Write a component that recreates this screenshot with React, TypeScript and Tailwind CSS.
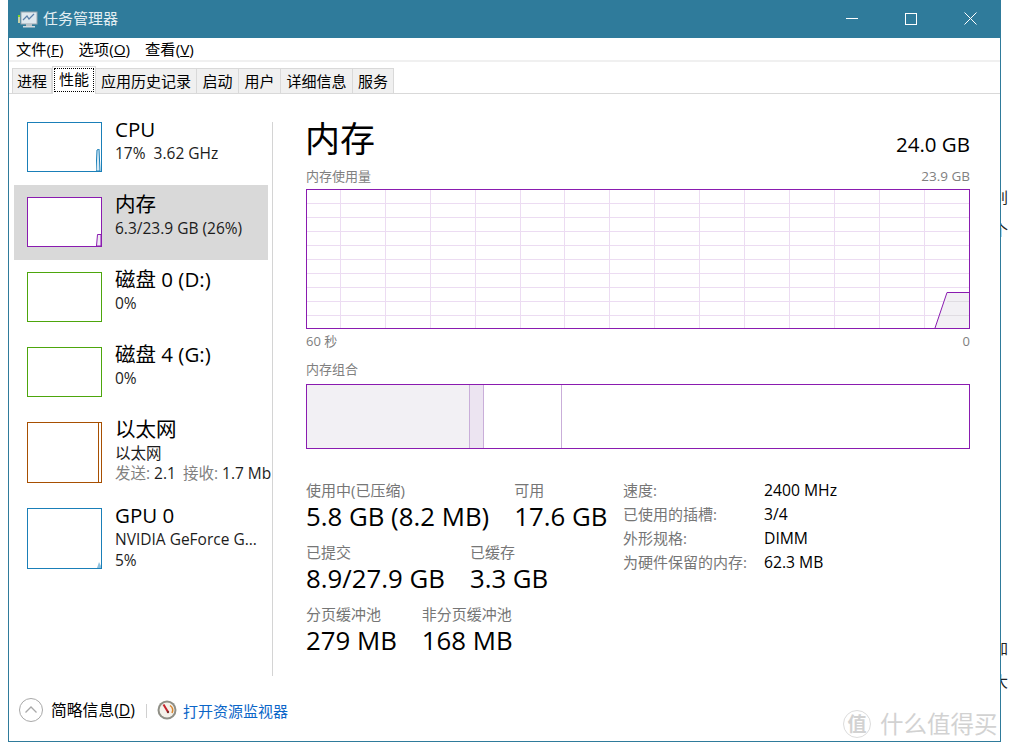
const FONT = "[font-family:'Open_Sans','Noto_Sans_CJK_SC',sans-serif]";

const sideItems = [
  { title: "CPU", lines: ["17%  3.62 GHz"], color: "border-[#1a7fb8]", h: "h-[75px]", thumb: "h-[50px]", spark: "cpu" },
  { title: "内存", lines: ["6.3/23.9 GB (26%)"], color: "border-[#8a1bb0]", h: "h-[75px]", thumb: "h-[50px]", spark: "mem", active: true },
  { title: "磁盘 0 (D:)", lines: ["0%"], color: "border-[#4da60c]", h: "h-[75px]", thumb: "h-[50px]" },
  { title: "磁盘 4 (G:)", lines: ["0%"], color: "border-[#4da60c]", h: "h-[75px]", thumb: "h-[50px]" },
  { title: "以太网", lines: ["以太网"], net: true, color: "border-[#a74f01]", h: "h-[86px]", thumb: "h-[61px]", spark: "net" },
  { title: "GPU 0", lines: ["NVIDIA GeForce G...", "5%"], color: "border-[#1a7fb8]", h: "h-[85px]", thumb: "h-[61px]", spark: "gpu" },
];

const tabs = [
  { label: "进程", w: "w-[40px]" },
  { label: "性能", w: "w-[44px]", active: true },
  { label: "应用历史记录", w: "w-[101px]" },
  { label: "启动", w: "w-[42px]" },
  { label: "用户", w: "w-[42px]" },
  { label: "详细信息", w: "w-[72px]" },
  { label: "服务", w: "w-[41px]" },
];

const specs = [
  ["速度:", "2400 MHz"],
  ["已使用的插槽:", "3/4"],
  ["外形规格:", "DIMM"],
  ["为硬件保留的内存:", "62.3 MB"],
];

const statRows = [
  [["使用中(已压缩)", "5.8 GB (8.2 MB)"], ["可用", "17.6 GB"]],
  [["已提交", "8.9/27.9 GB"], ["已缓存", "3.3 GB"]],
  [["分页缓冲池", "279 MB"], ["非分页缓冲池", "168 MB"]],
];

function Spark({ kind }: { kind?: string }) {
  if (kind === "cpu")
    return (
      <svg className="absolute bottom-0 right-0" width="5" height="22">
        <path d="M0 22 L1 1 L3 0 L4 22 Z" fill="#d9ebf5" stroke="#1a7fb8" strokeWidth="1" />
      </svg>
    );
  if (kind === "mem")
    return (
      <svg className="absolute bottom-0 right-0" width="5" height="12">
        <path d="M0.5 12 L1.5 0.5 L5 0.5 L5 12 Z" fill="#f1ecf4" stroke="#8a1bb0" strokeWidth="1" />
      </svg>
    );
  if (kind === "net") return <div className="absolute top-0 bottom-0 right-[2px] w-px bg-[#a74f01]" />;
  if (kind === "gpu")
    return (
      <svg className="absolute bottom-0 right-0" width="4" height="6">
        <path d="M0 6 L2 0 L4 4 L4 6 Z" fill="#8fc1de" />
      </svg>
    );
  return null;
}

function SideItem({ item }: { item: (typeof sideItems)[number] }) {
  return (
    <div className={`flex w-[254px] pl-[13px] pt-[12px] ${item.h} ${item.active ? "bg-[#d9d9d9]" : ""}`}>
      <div className={`relative w-[75px] shrink-0 border bg-white ${item.color} ${item.thumb}`}>
        <Spark kind={item.spark} />
      </div>
      <div className="ml-[13px] -mt-[6px] whitespace-nowrap text-black">
        <div className="h-[27px] text-[20.5px] leading-[26px]">{item.title}</div>
        {item.lines.map((l) => (
          <div key={l} className="h-[21px] whitespace-pre text-[15.5px] leading-[21px] text-[#1c1c1c]">
            {l}
          </div>
        ))}
        {item.net && (
          <div className="h-[18px] text-[15.5px] leading-[18px] text-[#1c1c1c]">
            <span className="text-[#808080]">发送:</span> 2.1 <span className="ml-[3px] text-[#808080]">接收:</span> 1.7 Mb
          </div>
        )}
      </div>
    </div>
  );
}

function UsageChart() {
  const v = [34, 79, 124, 169, 214, 258, 303, 348, 393, 438, 483, 528, 573, 618];
  const h = [14, 28, 42, 56, 70, 84, 98, 112, 126];
  return (
    <svg width="664" height="140" className="block" shapeRendering="crispEdges">
      {v.map((x) => (
        <line key={x} x1={x + 0.5} x2={x + 0.5} y1="0" y2="140" stroke="#ecdcf2" />
      ))}
      {h.map((y) => (
        <line key={y} x1="0" x2="664" y1={y + 0.5} y2={y + 0.5} stroke="#ecdcf2" />
      ))}
      <path d="M629 139 L641 103.5 L664 103.5 L664 139 Z" fill="#f1eef3" fillOpacity="0.9" />
      <line x1="641" x2="664" y1="112.5" y2="112.5" stroke="#e0dce2" />
      <line x1="634" x2="664" y1="126.5" y2="126.5" stroke="#e0dce2" />
      <path d="M629 139 L641 103.5 L664 103.5" fill="none" stroke="#8a1bb0" shapeRendering="auto" />
      <rect x="0.5" y="0.5" width="663" height="139" fill="none" stroke="#8a1bb0" />
    </svg>
  );
}

function AppIcon() {
  return (
    <svg width="20" height="18" viewBox="0 0 20 18">
      <rect x="3" y="2" width="16" height="12" fill="#dfe8ee" stroke="#9aa7b0" />
      <path d="M5 10 L9 6 L11 9 L16 4" fill="none" stroke="#5a7fa8" strokeWidth="1.2" />
      <rect x="0" y="6" width="2" height="7" fill="#c6d0a8" />
      <rect x="0" y="5" width="2" height="2" fill="#7ed321" />
      <rect x="8" y="14" width="6" height="2" fill="#b8c2c8" />
      <rect x="5" y="16" width="12" height="1.5" fill="#d3dade" />
    </svg>
  );
}

function GaugeIcon() {
  return (
    <svg width="20" height="20" viewBox="0 0 20 20">
      <circle cx="10" cy="10" r="9.5" fill="#8f8f86" />
      <circle cx="10" cy="10" r="7.5" fill="#f4f1ea" />
      <path d="M13 5.5 A6 6 0 0 1 15 13" fill="none" stroke="#d9842b" strokeWidth="1.5" />
      <path d="M6.5 4.5 L11 12" stroke="#c4202a" strokeWidth="2" />
      <circle cx="11" cy="12" r="1.2" fill="#7d2a25" />
    </svg>
  );
}

export default function App() {
  return (
    <div className={`relative h-[750px] w-[1009px] overflow-hidden bg-white ${FONT}`}>
      <div className="ml-[8px] flex h-[742px] w-[993px] flex-col border-x border-b border-[#2f7b9b]">
        {/* title bar */}
        <div className="flex h-[38px] shrink-0 items-center bg-[#2f7b9b] pl-[10px] pb-[1px] -mx-px">
          <AppIcon />
          <span className="ml-[5px] text-[15px] text-[#e3eef2]">任务管理器</span>
          <div className="ml-auto flex items-center text-white">
            <svg width="12" height="2" className="mr-[47px]"><rect width="12" height="1" fill="#fff" /></svg>
            <svg width="12" height="12" className="mr-[47px]"><rect x="0.5" y="0.5" width="11" height="11" fill="none" stroke="#fff" /></svg>
            <svg width="13" height="13" className="mr-[24px]"><path d="M0.5 0.5 L12.5 12.5 M12.5 0.5 L0.5 12.5" stroke="#fff" fill="none" /></svg>
          </div>
        </div>

        {/* menu */}
        <div className="flex h-[24px] shrink-0 items-center gap-[15px] border-b-2 border-[#f0f0f0] pl-[7px] text-[15.3px] text-black">
          <span>文件(<u>F</u>)</span>
          <span>选项(<u>O</u>)</span>
          <span>查看(<u>V</u>)</span>
        </div>

        {/* tabs */}
        <div className="flex h-[32px] shrink-0 items-end border-b border-[#d9d9d9] pl-[3px] text-[15px] text-black">
          {tabs.map((t) => (
            <div
              key={t.label}
              className={
                t.active
                  ? `relative -mb-px flex h-[28px] items-start justify-center border-x border-t border-[#d9d9d9] bg-white pt-[1px] ${t.w}`
                  : `flex h-[25px] items-center justify-center border-r border-t border-[#d9d9d9] bg-[#f0f0f0] first:border-l ${t.w}`
              }
            >
              {t.active ? (
                <span className="flex h-[24px] w-[40px] items-center justify-center border border-dotted border-black pb-[1px]">{t.label}</span>
              ) : (
                t.label
              )}
            </div>
          ))}
        </div>

        {/* body */}
        <div className="flex min-h-0 flex-1 pt-[16px]">
          <div className="w-[263px] shrink-0 pl-[5px]">
            {sideItems.map((it) => (
              <SideItem key={it.title} item={it} />
            ))}
          </div>
          <div className="mt-[12px] h-[554px] w-px shrink-0 bg-[#d4d4d4]" />
          <div className="ml-[33px] w-[664px] shrink-0">
            <div className="flex h-[58px] items-end justify-between">
              <div className="-ml-px pb-[2px] text-[35px] leading-[54px] text-black">内存</div>
              <div className="pb-[11px] text-[20.5px] leading-[26px] text-black">24.0 GB</div>
            </div>
            <div className="flex h-[21px] items-center justify-between pb-[4px] text-[13px] text-[#808080]">
              <span>内存使用量</span>
              <span className="text-[13.5px]">23.9 GB</span>
            </div>
            <UsageChart />
            <div className="flex h-[26px] items-center justify-between text-[13px] text-[#808080]">
              <span>60 秒</span>
              <span>0</span>
            </div>
            <div className="flex h-[29px] items-end pb-[6px] text-[13px] leading-[18px] text-[#808080]">内存组合</div>
            <div className="flex h-[65px] border border-[#8a1bb0]">
              <div className="w-[163px] border-r border-[#c9aed9] bg-[#f2f0f4]" />
              <div className="w-[14px] border-r border-[#c9aed9] bg-[#ece4f1]" />
              <div className="w-[78px] border-r border-[#c9aed9]" />
            </div>
            <div className="mt-[32px] flex">
              <div className="w-[317px] shrink-0">
                {statRows.map((row, i) => (
                  <div key={i} className="flex h-[62px] gap-[25px] whitespace-nowrap">
                    {row.map(([label, value]) => (
                      <div key={label}>
                        <div className="h-[19px] text-[15px] leading-[19px] text-[#767676]">{label}</div>
                        <div className="text-[25.8px] leading-[33px] text-black">{value}</div>
                      </div>
                    ))}
                  </div>
                ))}
              </div>
              <div className="whitespace-nowrap">
                {specs.map(([k, v]) => (
                  <div key={k} className="flex h-[24px] leading-[19px]">
                    <span className="w-[141px] text-[15px] text-[#767676]">{k}</span>
                    <span className="text-[15.7px] text-black">{v}</span>
                  </div>
                ))}
              </div>
            </div>
          </div>
        </div>

        {/* footer */}
        <div className="flex h-[60px] shrink-0 items-center pl-[10px]">
          <svg width="24" height="24" viewBox="0 0 24 24" className="-mt-[2px]">
            <circle cx="12" cy="12" r="11.5" fill="none" stroke="#a8a8a8" />
            <path d="M6.5 14.5 L12 9 L17.5 14.5" fill="none" stroke="#a8a8a8" strokeWidth="1.3" />
          </svg>
          <span className="ml-[8px] text-[15.8px] text-black">简略信息(<u>D</u>)</span>
          <div className="ml-[11px] h-[14px] w-px bg-[#d0d0d0]" />
          <div className="ml-[10px] flex -mt-[2px]"><GaugeIcon /></div>
          <span className="ml-[6px] text-[15px] text-[#0b66c8]">打开资源监视器</span>
        </div>
      </div>

      {/* page behind the window, clipped text */}
      <div className="absolute left-[1001px] top-[187px] w-[8px] overflow-hidden text-[15px] leading-[20px] text-[#222]">
        <div className="-ml-[8px] whitespace-nowrap">别</div>
        <div className="-ml-[8px] mt-[13px] whitespace-nowrap">个</div>
      </div>
      <div className="absolute left-[1001px] top-[638px] w-[8px] overflow-hidden text-[15px] leading-[20px] text-[#222]">
        <div className="-ml-[8px] whitespace-nowrap">加</div>
        <div className="-ml-[8px] mt-[13px] whitespace-nowrap">大</div>
      </div>

      {/* watermark */}
      <div className="absolute left-[843px] top-[710px] flex items-center gap-[9px] text-[#d2d2d2]">
        <div className="flex h-[28px] w-[28px] items-center justify-center rounded-full border border-[#dcdcdc] text-[19px] font-bold leading-none">值</div>
        <span className="text-[23.5px] leading-[28px]">什么值得买</span>
      </div>
    </div>
  );
}
